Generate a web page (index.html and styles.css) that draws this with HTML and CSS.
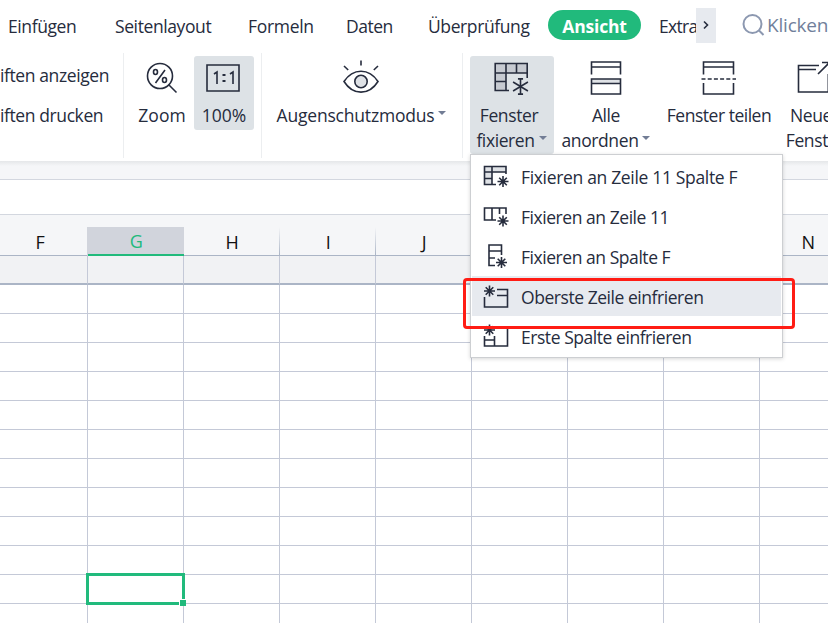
FILE: index.html
```html
<!DOCTYPE html>
<html lang="de">
<head>
<meta charset="utf-8">
<title>Fenster fixieren</title>
<link rel="stylesheet" href="styles.css">
</head>
<body>
<svg class="defs">
	<symbol id="flake" viewBox="-8 -8 16 16">
		<path d="M0-7.6V7.6M-7-4.2L7 4.2M-7 4.2L7-4.2M-2.4-7.2H2.400M-2.4 7.2H2.400"/>
	</symbol>
	<symbol id="star" viewBox="-6 -6 12 12">
		<path d="M0-5.500V5.500M-5.500 0H5.500M-3.800-3.800L3.800 3.800M-3.800 3.800L3.800-3.800"/>
	</symbol>
</svg>

<div class="app">
	<div class="tabs">
		<span class="tab t1">Einfügen</span>
		<span class="tab t2">Seitenlayout</span>
		<span class="tab t3">Formeln</span>
		<span class="tab t4">Daten</span>
		<span class="tab t5">Überprüfung</span>
		<span class="tab active">Ansicht</span>
		<span class="tab t7">Extras</span>
		<span class="more"><svg width="20" height="35"><path d="M8 13.5L11.5 17L8 20.5"/></svg></span>
		<svg class="lens" width="24" height="24"><circle cx="10.5" cy="10" r="9"/><path d="M17 16.500L21.500 21"/></svg>
		<span class="search">Klicken</span>
	</div>

	<div class="ribbon">
		<div class="group checks">
			<span>iften anzeigen</span>
			<span>iften drucken</span>
		</div>
		<div class="group zoom">
			<div class="btn b-zoom">
				<svg width="60" height="48">
					<circle cx="28" cy="20" r="12.5"/><path d="M36.500 28.500L44.500 36.500M33 14L23.500 27"/>
					<ellipse cx="23.500" cy="16" rx="2" ry="2.500"/><ellipse cx="32.500" cy="24" rx="2" ry="2.500"/>
				</svg>
				<span>Zoom</span>
			</div>
			<div class="btn b-full pressed">
				<svg width="60" height="48">
					<path d="M13 9H45V35H13zM20 18L23 16V28M36 18L39 16V28"/><path d="M28.500 19H31.500M28.500 25H31.500" class="dots"/>
				</svg>
				<span>100%</span>
			</div>
		</div>
		<div class="group eye">
			<div class="btn">
				<svg width="62" height="48">
					<path d="M13 25.500C22 11.800 38 11.800 47 25.500C38 39.700 22 39.700 13 25.500zM30 4.500V9.500M13 10L17.200 14M47 10L42.800 14"/>
					<circle class="shade" cx="30" cy="25.500" r="6.200"/>
				</svg>
				<span>Augenschutzmodus<i class="arrow"></i></span>
			</div>
		</div>
		<div class="group windows">
			<div class="btn b-freeze pressed">
				<svg width="60" height="48">
					<path class="tint" d="M13 7.500H45V17H24V34.500H13z"/>
					<path d="M45.200 22V7.500H13.200V34.500H27M13 17H45M24 7.500V34.500M34.500 7.500V17M13 25.500H24"/>
					<use href="#flake" x="30" y="22" width="17" height="17"/>
				</svg>
				<span>Fenster<br><b>fixieren<i class="arrow"></i></b></span>
			</div>
			<div class="btn b-all">
				<svg width="60" height="48">
					<path class="shade bare" d="M15.500 23H44.500V27H15.500z"/>
					<path d="M15.500 18.500V6H44.500V18.500M15.500 11H44.500M15.500 23H44.500V38H15.500zM15.500 27.500H44.500"/>
				</svg>
				<span>Alle<br>anordnen<i class="arrow"></i></span>
			</div>
			<div class="btn b-split">
				<svg width="60" height="48">
					<path d="M14.500 18.500V6H44.500V18.500M14.500 11H44.500M14.500 27V38H44.500V27"/><path d="M12.500 23H47" stroke-dasharray="4 2.200"/>
				</svg>
				<span>Fenster teilen</span>
			</div>
			<div class="btn b-new">
				<svg width="60" height="48">
					<path d="M33 9.500H12.500V36H43M12.500 13.500H30M32 18L43.500 6.500M36 6.500H44M42.300 18V36"/>
				</svg>
				<span>Neues<br>Fenster</span>
			</div>
		</div>
	</div>

	<div class="strip"></div>
	<div class="formula"></div>

	<table class="sheet">
		<thead>
			<tr><th>F</th><th class="sel">G</th><th class="fade">H</th><th class="fade">I</th><th>J</th><th></th><th></th><th></th><th>N</th></tr>
		</thead>
		<tbody>
			<tr class="frozen"><td></td><td></td><td></td><td></td><td></td><td></td><td></td><td></td><td></td></tr>
			<tr><td></td><td></td><td></td><td></td><td></td><td></td><td></td><td></td><td></td></tr>
			<tr><td></td><td></td><td></td><td></td><td></td><td></td><td></td><td></td><td></td></tr>
			<tr><td></td><td></td><td></td><td></td><td></td><td></td><td></td><td></td><td></td></tr>
			<tr><td></td><td></td><td></td><td></td><td></td><td></td><td></td><td></td><td></td></tr>
			<tr><td></td><td></td><td></td><td></td><td></td><td></td><td></td><td></td><td></td></tr>
			<tr><td></td><td></td><td></td><td></td><td></td><td></td><td></td><td></td><td></td></tr>
			<tr><td></td><td></td><td></td><td></td><td></td><td></td><td></td><td></td><td></td></tr>
			<tr><td></td><td></td><td></td><td></td><td></td><td></td><td></td><td></td><td></td></tr>
			<tr><td></td><td></td><td></td><td></td><td></td><td></td><td></td><td></td><td></td></tr>
			<tr><td></td><td></td><td></td><td></td><td></td><td></td><td></td><td></td><td></td></tr>
			<tr><td></td><td></td><td></td><td></td><td></td><td></td><td></td><td></td><td></td></tr>
			<tr><td></td><td></td><td></td><td></td><td></td><td></td><td></td><td></td><td></td></tr>
		</tbody>
	</table>
	<div class="cursor"></div>

	<div class="menu">
		<div class="item wide">
			<svg width="26" height="26">
				<path class="shade bare" d="M2 4H23V9H9V22H2z"/>
				<path d="M23 11V3.500H1.500V21.500H13M1.500 9H23M9 3.500V21.500M1.500 15.500H9"/>
				<use href="#star" x="14" y="12.500" width="12" height="12"/>
			</svg>
			<span>Fixieren an Zeile 11 Spalte F</span>
		</div>
		<div class="item">
			<svg width="26" height="26">
				<path d="M23 11V5H1.500V17H13M9 5V17M16.500 5V11"/>
				<use href="#star" x="14" y="12" width="12" height="12"/>
			</svg>
			<span>Fixieren an Zeile 11</span>
		</div>
		<div class="item">
			<svg width="26" height="26">
				<path d="M18.500 12V2H6V22.500H12M6 8H18.500M6 15H12"/>
				<use href="#star" x="12.500" y="13.500" width="12" height="12"/>
			</svg>
			<span>Fixieren an Spalte F</span>
		</div>
		<div class="item hover">
			<svg width="26" height="26">
				<path d="M14 6.500H24.500V24H1.500V14M14 12.500H24.500"/>
				<use href="#star" x=".5" y="2" width="12" height="12"/>
			</svg>
			<span>Oberste Zeile einfrieren</span>
		</div>
		<div class="item">
			<svg width="26" height="26">
				<path d="M17 5H24.500V23H1.500V13M1.500 17H11.500M11.500 13V23"/>
				<use href="#star" x=".5" y="1" width="12" height="12"/>
			</svg>
			<span>Erste Spalte einfrieren</span>
		</div>
	</div>
	<div class="mark"></div>
</div>
</body>
</html>
```
FILE: styles.css
```css
* { box-sizing: border-box; }
body {
	margin: 0;
	background: #fff;
	color: #262c3d;
	font: 17.5px/25px "Open Sans", "Noto Sans", sans-serif;
	letter-spacing: -.4px;
}
.app {
	position: relative;
	width: 828px;
	height: 623px;
	overflow: hidden;
}
svg { fill: none; stroke: #262c3d; stroke-width: 1.6; flex: none; display: block; }
symbol path { vector-effect: non-scaling-stroke; }
.defs { position: absolute; width: 0; height: 0; }
.shade { fill: #dfe2e6; }
.tint { fill: #c6cad1; stroke: none; }
.bare { stroke: none; }
.dots { stroke-width: 2.2; }

/* tabs */
.tabs {
	display: flex;
	height: 53px;
	padding: 8px 0 0 8px;
	white-space: nowrap;
}
.tab { flex: none; height: 32px; line-height: 37px; }
.t1 { width: 107px; }
.t2 { width: 133px; }
.t3 { width: 98px; letter-spacing: -.3px; }
.t4 { width: 82px; letter-spacing: -.5px; }
.t5 { width: 120px; }
.t7 { width: 37px; overflow: hidden; letter-spacing: -.7px; }
.active {
	width: 93px;
	height: 30px;
	margin: 2px 18px 0 0;
	border-radius: 15px;
	background: #21ba7c;
	color: #fff;
	font-weight: bold;
	letter-spacing: -.2px;
	line-height: 33px;
	text-align: center;
}
.more { width: 20px; height: 35px; background: #e7eaef; flex: none; }
.lens { margin: 6px 1px 0 26px; stroke: #8c98b0; stroke-width: 2; }
.search { color: #717f9b; font-size: 19px; letter-spacing: -.2px; line-height: 35px; }

/* ribbon */
.ribbon { display: flex; height: 108px; white-space: nowrap; }
.group { flex: none; height: 105px; display: flex; border-right: 1px solid #eceef0; }
.checks { width: 124px; flex-direction: column; padding-top: 10px; }
.checks span { height: 40px; }
.zoom { width: 138px; padding: 3px 0 0 8px; letter-spacing: 0; }
.eye { width: 201px; padding: 3px 0 0; letter-spacing: -.2px; }
.windows { border: 0; padding: 3px 0 0 7px; }
.btn {
	flex: none;
	display: flex;
	flex-direction: column;
	align-items: center;
	text-align: center;
}
.btn svg { margin-bottom: -1px; }
.b-zoom { width: 60px; margin-right: 2px; }
.b-full { width: 60px; height: 74px; }
.eye .btn { width: 199px; }
.b-freeze { width: 84px; height: 98px; }
.b-freeze span { margin-left: -6px; }
.b-freeze b { font-weight: normal; margin-right: -5px; }
.b-all { width: 104px; }
.b-split { width: 121px; }
.b-split span { letter-spacing: -.48px; padding-left: 1px; }
.b-new { width: 74px; }
.b-new span { margin-left: -2px; }
.pressed { background: #dde2e6; border-radius: 3px; }
.arrow {
	display: inline-block;
	margin-left: 4px;
	border: 4px solid transparent;
	border-top-color: #727d95;
	border-bottom: 0;
	vertical-align: 7px;
}

.strip {
	height: 19px;
	border-bottom: 1px solid #d3d7df;
	background: linear-gradient(#e5e7e9, #f5f6f8 5px);
}
.formula { height: 35px; border-bottom: 1px solid #d3d7df; }

/* sheet */
.sheet {
	width: 856px;
	table-layout: fixed;
	border-collapse: separate;
	border-spacing: 0;
	border-top: 12px solid #f5f6f8;
}
th {
	width: 96px;
	height: 29px;
	padding: 2px 0 0;
	background: #f5f6f8;
	border-bottom: 1px solid #abb5c6;
	color: #111;
	font-weight: normal;
	font-size: 18px;
	line-height: 25px;
}
th:first-child { width: 88px; padding-right: 8px; }
th.sel {
	background: #d1d4dc;
	border-bottom: 2px solid #21ba7c;
	color: #21ba7c;
	box-shadow: -1px 0 #d1d4dc, -1px 2px #21ba7c;
	clip-path: inset(0 0 0 -1px);
}
th.fade { background: linear-gradient(#f5f6f8, #abb5c6) 100% 0 / 1px 100% no-repeat #f5f6f8; }
td {
	height: 29px;
	padding: 0;
	border-right: 1px solid #c4c9d7;
	border-bottom: 1px solid #c4c9d7;
}
.frozen td { background: #f1f2f4; border-bottom: 2px solid #abb5c6; }

.cursor {
	position: absolute;
	left: 86px;
	top: 573px;
	width: 99px;
	height: 32px;
	border: 3px solid #21ba7c;
}
.cursor::after {
	content: "";
	position: absolute;
	right: -4px;
	bottom: -4px;
	width: 6px;
	height: 6px;
	border: solid #fff;
	border-width: 1px 0 0 1px;
	background: #21ba7c;
}

/* dropdown */
.menu {
	position: absolute;
	left: 470px;
	top: 154px;
	width: 313px;
	height: 204px;
	padding: 1px 1px 0;
	border: 1px solid #cdcfd2;
	background: #fff;
	box-shadow: 0 1px 4px rgba(0, 0, 0, .16);
}
.item { display: flex; height: 40px; padding: 7px 0 0 11px; white-space: nowrap; letter-spacing: -.45px; }
.wide { letter-spacing: -.33px; }
.item span { margin-left: 12px; line-height: 28px; }
.hover { background: #e7eaef; }
.mark {
	position: absolute;
	left: 463px;
	top: 278px;
	width: 332px;
	height: 51px;
	border: 3px solid #ff1c14;
	border-radius: 4px;
}
```
